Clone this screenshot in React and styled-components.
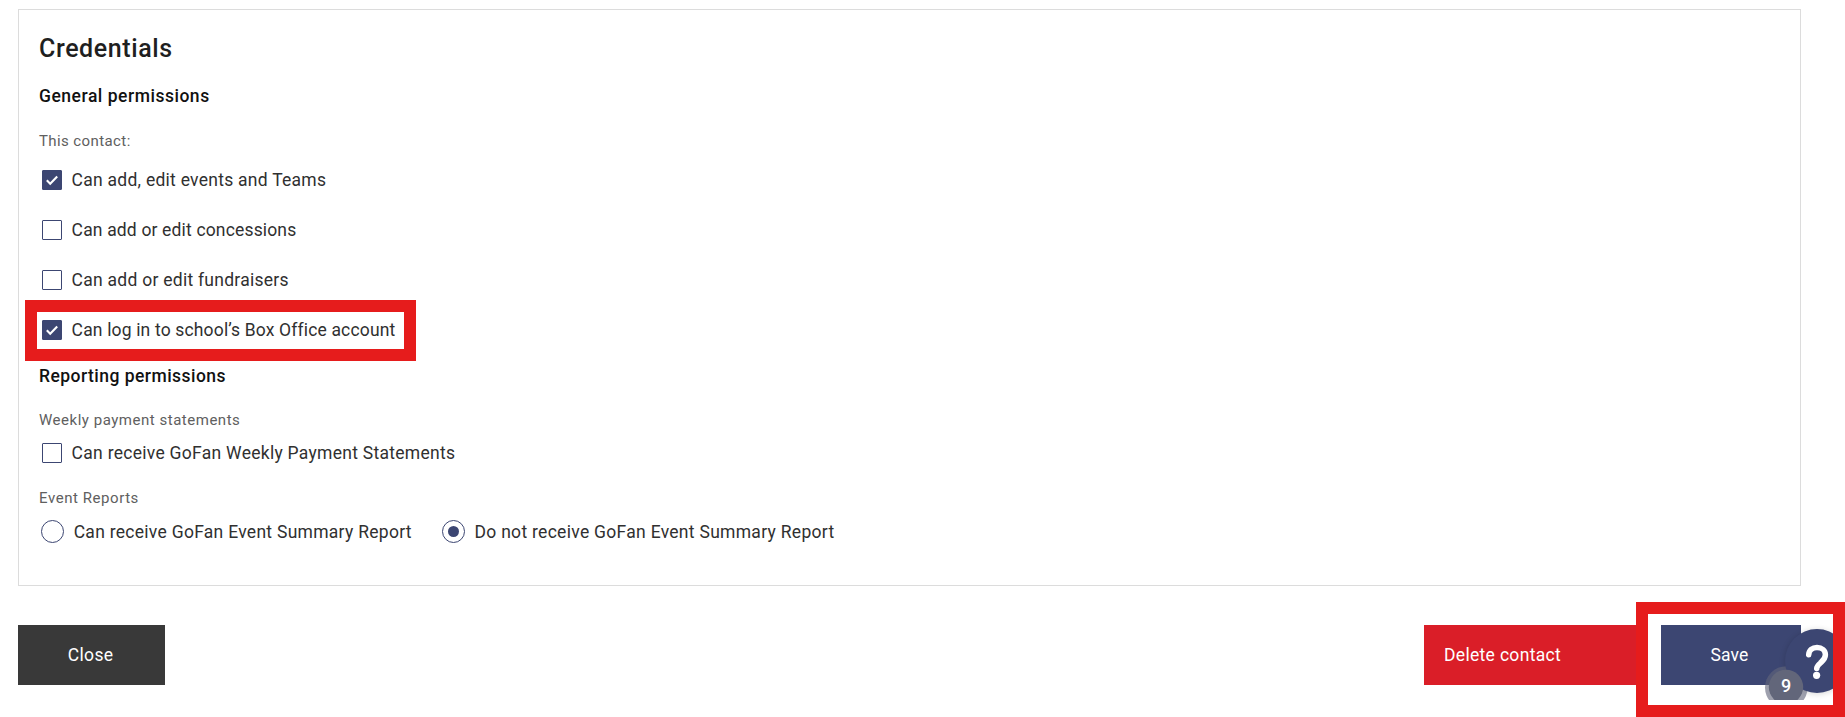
import React from "react";
import styled, { createGlobalStyle } from "styled-components";

const navy = "#3c4672";
const markerRed = "#e61c1c";

const GlobalStyle = createGlobalStyle`
  *, *::before, *::after { box-sizing: border-box; }
  body {
    margin: 0;
    background: #fff;
    color: #303030;
    font-family: "Roboto", "Liberation Sans", sans-serif;
    font-size: 17.5px;
    overflow: hidden;
  }
`;

const Page = styled.main`
  position: relative;
  width: 1845px;
  height: 717px;
  padding: 9px 44px 0 18px;
  overflow: hidden;
`;

const Panel = styled.section`
  display: flex;
  flex-direction: column;
  height: 577px;
  padding: 23px 20px 0;
  border: 1px solid #dcdcdc;
`;

const Title = styled.h2`
  margin: 0;
  font-size: 25px;
  font-weight: 500;
  line-height: 32px;
  letter-spacing: 0.6px;
  color: #1f1f1f;
`;

const SectionTitle = styled.h3`
  margin: ${({ $top }) => $top}px 0 0;
  font-size: 17.5px;
  font-weight: 500;
  line-height: 24px;
  letter-spacing: ${({ $track }) => $track}px;
  color: #111;
`;

const Caption = styled.p`
  margin: ${({ $top }) => $top}px 0 0;
  font-size: 15px;
  line-height: 20px;
  letter-spacing: ${({ $track = 0.52 }) => $track}px;
  color: #606060;
`;

const CheckList = styled.div`
  display: flex;
  flex-direction: column;
  margin-top: ${({ $top }) => $top}px;
`;

const CheckRow = styled.label`
  display: flex;
  align-items: center;
  gap: 9.6px;
  height: ${({ $height = 50 }) => $height}px;
  padding-left: 3px;
`;

const Box = styled.span`
  display: flex;
  align-items: center;
  justify-content: center;
  width: 20px;
  height: 20px;
  border: 1px solid ${navy};
  border-radius: 1px;
  background: ${({ $checked }) => ($checked ? navy : "#fff")};
`;

const LabelText = styled.span`
  line-height: 24px;
  letter-spacing: ${({ $track }) => $track}px;
  white-space: nowrap;
`;

const RadioGroup = styled.div`
  display: flex;
  align-items: center;
  gap: 30px;
  height: 39px;
  margin-top: 4px;
  padding-left: 2px;
`;

const RadioOption = styled.label`
  display: flex;
  align-items: center;
  gap: 9.7px;
`;

const RadioRing = styled.span`
  display: flex;
  align-items: center;
  justify-content: center;
  width: 23px;
  height: 23px;
  border: 1px solid ${navy};
  border-radius: 50%;
`;

const RadioDot = styled.span`
  width: 11px;
  height: 11px;
  border-radius: 50%;
  background: ${navy};
`;

const Actions = styled.footer`
  display: flex;
  margin-top: 39px;
`;

const ActionGroup = styled.div`
  display: flex;
  gap: 20px;
  margin-left: auto;
`;

const Button = styled.button`
  width: ${({ $width }) => $width}px;
  height: 60px;
  padding: 0 0 0 ${({ $inset }) => $inset}px;
  border: 0;
  background: ${({ $color }) => $color};
  color: #fff;
  font: inherit;
  line-height: 24px;
  letter-spacing: ${({ $track }) => $track}px;
  text-align: left;
`;

const Marker = styled.div`
  position: absolute;
  left: ${({ $x }) => $x}px;
  top: ${({ $y }) => $y}px;
  width: ${({ $w }) => $w}px;
  height: ${({ $h }) => $h}px;
  border: 12px solid ${markerRed};
`;

const HelpWidget = styled.svg`
  position: absolute;
  left: 1745px;
  top: 617px;
`;

const BadgeText = styled.text`
  font-family: "Roboto", sans-serif;
  font-size: 18px;
  font-weight: 500;
  fill: #fff;
  text-anchor: middle;
`;

function Checkbox({ label, checked, track, height }) {
  return (
    <CheckRow $height={height}>
      <Box $checked={checked}>
        {checked && (
          <svg width="18" height="18" viewBox="0 0 18 18" fill="none">
            <path d="M3.8 9.3 7.2 12.7 14.2 5.5" stroke="#fff" strokeWidth="2.1" />
          </svg>
        )}
      </Box>
      <LabelText $track={track}>{label}</LabelText>
    </CheckRow>
  );
}

function Radio({ label, selected, track }) {
  return (
    <RadioOption>
      <RadioRing>{selected && <RadioDot />}</RadioRing>
      <LabelText $track={track}>{label}</LabelText>
    </RadioOption>
  );
}

function Help() {
  return (
    <HelpWidget width="100" height="100" viewBox="0 0 100 100">
      <defs>
        <clipPath id="badgeClip">
          <rect width="100" height="83" />
        </clipPath>
        <filter id="soft" x="-30%" y="-30%" width="160%" height="160%">
          <feGaussianBlur stdDeviation="3" />
        </filter>
      </defs>
      <circle cx="72" cy="45" r="32" fill="#000" opacity="0.16" filter="url(#soft)" />
      <g clipPath="url(#badgeClip)">
        <circle cx="41.3" cy="70.5" r="21.3" fill="#62667a" fillOpacity="0.62" />
      </g>
      <circle cx="72" cy="44" r="32" fill={navy} />
      <path
        d="M63.7 37.8C64 33.2 67.3 30.6 72 30.6C76.9 30.6 80.4 33.4 80.4 37.7C80.4 41.8 78 43.6 75.4 46C72.9 48.2 71.7 49.3 71.7 51.6"
        fill="none"
        stroke="#fff"
        strokeWidth="5.5"
        strokeLinecap="round"
      />
      <circle cx="71.6" cy="58.3" r="3.6" fill="#fff" />
      <g clipPath="url(#badgeClip)">
        <circle cx="41" cy="70" r="17.2" fill="#62667a" />
      </g>
      <BadgeText x="41" y="74.9">9</BadgeText>
    </HelpWidget>
  );
}

export default function App() {
  return (
    <>
      <GlobalStyle />
      <Page>
        <Panel>
          <Title>Credentials</Title>
          <SectionTitle $top={19} $track={0.52}>General permissions</SectionTitle>
          <Caption $top={23} $track={0.4}>This contact:</Caption>
          <CheckList $top={4}>
            <Checkbox checked label="Can add, edit events and Teams" track={0.26} />
            <Checkbox label="Can add or edit concessions" track={0.16} />
            <Checkbox label="Can add or edit fundraisers" track={0.26} />
            <Checkbox checked label="Can log in to school’s Box Office account" track={0.16} />
          </CheckList>
          <SectionTitle $top={9} $track={0.46}>Reporting permissions</SectionTitle>
          <Caption $top={22}>Weekly payment statements</Caption>
          <CheckList $top={3}>
            <Checkbox height={40} label="Can receive GoFan Weekly Payment Statements" track={0.28} />
          </CheckList>
          <Caption $top={15} $track={0.56}>Event Reports</Caption>
          <RadioGroup>
            <Radio label="Can receive GoFan Event Summary Report" track={0.28} />
            <Radio selected label="Do not receive GoFan Event Summary Report" track={0.29} />
          </RadioGroup>
        </Panel>
        <Actions>
          <Button $width={147} $inset={49.8} $color="#393939" $track={0.34}>Close</Button>
          <ActionGroup>
            <Button $width={217} $inset={20} $color="#da1e28" $track={0.32}>Delete contact</Button>
            <Button $width={140} $inset={49.6} $color={navy} $track={0.12}>Save</Button>
          </ActionGroup>
        </Actions>
        <Help />
        <Marker $x={25} $y={300} $w={390.5} $h={61} />
        <Marker $x={1636} $y={602} $w={208.5} $h={115} />
      </Page>
    </>
  );
}
